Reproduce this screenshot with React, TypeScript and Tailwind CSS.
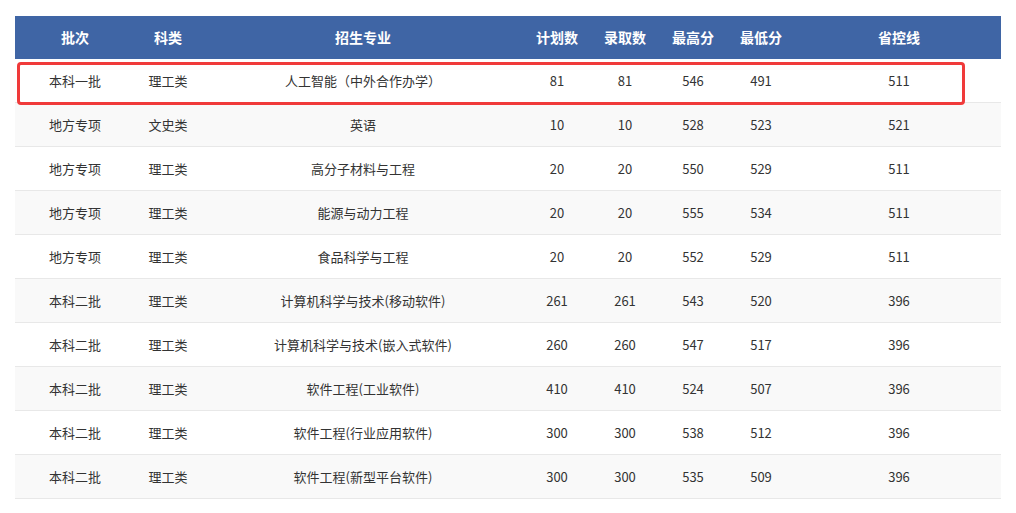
const cols = "grid grid-cols-[120px_66px_324px_64px_72px_64px_72px_204px]"

const rows = [
  ["本科一批", "理工类", "人工智能（中外合作办学）", "81", "81", "546", "491", "511"],
  ["地方专项", "文史类", "英语", "10", "10", "528", "523", "521"],
  ["地方专项", "理工类", "高分子材料与工程", "20", "20", "550", "529", "511"],
  ["地方专项", "理工类", "能源与动力工程", "20", "20", "555", "534", "511"],
  ["地方专项", "理工类", "食品科学与工程", "20", "20", "552", "529", "511"],
  ["本科二批", "理工类", "计算机科学与技术(移动软件)", "261", "261", "543", "520", "396"],
  ["本科二批", "理工类", "计算机科学与技术(嵌入式软件)", "260", "260", "547", "517", "396"],
  ["本科二批", "理工类", "软件工程(工业软件)", "410", "410", "524", "507", "396"],
  ["本科二批", "理工类", "软件工程(行业应用软件)", "300", "300", "538", "512", "396"],
  ["本科二批", "理工类", "软件工程(新型平台软件)", "300", "300", "535", "509", "396"],
]

const heads = ["批次", "科类", "招生专业", "计划数", "录取数", "最高分", "最低分", "省控线"]

export default function App() {
  return (
    <div className="w-[1016px] h-[513px] bg-white pt-[16px] pl-[15px] overflow-hidden" style={{ fontFamily: '"Microsoft YaHei", "Noto Sans CJK SC", sans-serif' }}>
      <div className="relative w-[986px]">
        <div className={`${cols} h-[43px] bg-[#3f65a5] text-white font-bold text-[14px] items-center`}>
          {heads.map((h) => (
            <div key={h} className="text-center">{h}</div>
          ))}
        </div>
        {rows.map((r, i) => (
          <div key={i} className={`${cols} h-[44px] items-center text-[13px] text-[#333] border-b border-[#e8e8e8] ${i % 2 === 1 ? "bg-[#f9f9f9]" : "bg-white"}`}>
            {r.map((c, j) => (
              <div key={j} className="text-center">{c}</div>
            ))}
          </div>
        ))}
        <div className="absolute left-[2px] top-[46px] w-[948px] h-[43px] border-[3px] border-[#f03a3a] rounded-[4px]" />
      </div>
    </div>
  )
}
